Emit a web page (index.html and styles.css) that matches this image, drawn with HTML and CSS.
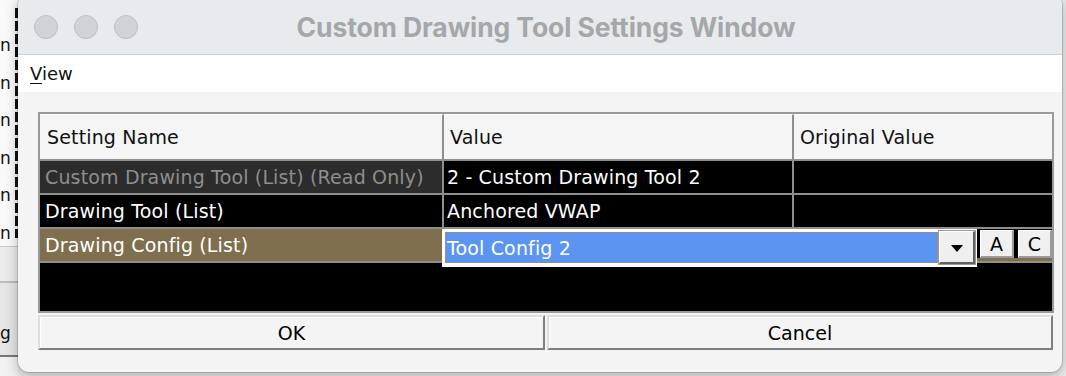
FILE: index.html
```html
<!DOCTYPE html>
<html>
<head>
<meta charset="utf-8">
<link rel="stylesheet" href="styles.css">
</head>
<body>
<div class="desk">
  <div class="bg-strip">
    <div class="bg-list">
      <div class="bg-item">n</div>
      <div class="bg-item">n</div>
      <div class="bg-item">n</div>
      <div class="bg-item">n</div>
      <div class="bg-item">n</div>
      <div class="bg-item">n</div>
    </div>
    <div class="bg-lower">
      <div class="bg-band"></div>
      <div class="bg-btn">g</div>
    </div>
  </div>
</div>
<div class="window">
  <div class="titlebar">
    <div class="lights"><span class="light"></span><span class="light"></span><span class="light"></span></div>
    <div class="title">Custom Drawing Tool Settings Window</div>
    <div></div>
  </div>
  <div class="menubar"><span class="menu"><u>V</u>iew</span></div>
  <div class="content">
    <div class="grid-frame">
      <div class="row head">
        <div class="cell c1">Setting Name</div>
        <div class="cell c2">Value</div>
        <div class="cell c3">Original Value</div>
      </div>
      <div class="row">
        <div class="cell c1 ro">Custom Drawing Tool (List) (Read Only)</div>
        <div class="cell c2">2 - Custom Drawing Tool 2</div>
        <div class="cell c3"></div>
      </div>
      <div class="row">
        <div class="cell c1">Drawing Tool (List)</div>
        <div class="cell c2">Anchored VWAP</div>
        <div class="cell c3"></div>
      </div>
      <div class="row sel">
        <div class="cell c1 selname">Drawing Config (List)</div>
        <div class="editor">
          <div class="combo">
            <div class="combo-field">Tool Config 2</div>
            <div class="combo-arrow"><span class="tri"></span></div>
          </div>
          <div class="edit-btns">
            <div class="mini-btn">A</div>
            <div class="mini-btn">C</div>
          </div>
        </div>
      </div>
      <div class="filler"></div>
    </div>
    <div class="actions">
      <div class="btn">OK</div>
      <div class="btn">Cancel</div>
    </div>
  </div>
</div>
</body>
</html>
```
FILE: styles.css
```css
* { box-sizing: border-box; }
html, body { margin: 0; padding: 0; }
body {
  width: 1066px;
  height: 376px;
  overflow: hidden;
  position: relative;
  background: #ececec;
  font-family: "DejaVu Sans", sans-serif;
  font-size: 19px;
}

/* backdrop app */
.desk { height: 376px; display: flex; }
.bg-strip { width: 18px; height: 376px; display: flex; flex-direction: column; background: #fafafa; }
.bg-list {
  height: 246px;
  padding-top: 27px;
  overflow: hidden;
  background: repeating-linear-gradient(to bottom, #111 0 10px, transparent 10px 13px) right 0 top 8px / 3px 230px no-repeat;
}
.bg-item { height: 37.5px; line-height: 37.5px; font-size: 17px; color: #111; }
.bg-lower { flex: 1; display: flex; flex-direction: column; border-top: 1px solid #c9c9c9; background: #f2f2f2; }
.bg-band { height: 36px; border-bottom: 2px solid #bdbdbd; background: #ececec; }
.bg-btn {
  height: 74px;
  padding-top: 40px;
  line-height: 20px;
  font-size: 17px;
  color: #111;
  border-bottom: 2px solid #777;
  background: #e6e6e6;
}

/* window */
.window {
  position: absolute;
  left: 18px;
  top: -6px;
  width: 1044px;
  height: 378px;
  border-radius: 11px;
  background: #f4f4f4;
  overflow: hidden;
  display: flex;
  flex-direction: column;
  box-shadow: 0 0 0 1px rgba(0,0,0,0.14), 0 4px 14px rgba(0,0,0,0.28);
}
.titlebar {
  height: 61px;
  flex: none;
  background: #e8ebee;
  border-bottom: 1px solid #d0d1d3;
  display: grid;
  grid-template-columns: 1fr auto 1fr;
  align-items: center;
  padding-top: 6px;
}
.lights { display: flex; gap: 16px; padding-left: 16px; }
.light {
  width: 24px;
  height: 24px;
  border-radius: 50%;
  background: #d1d4d7;
  border: 1px solid #bcbfc2;
}
.title {
  font-family: Inter, "Liberation Sans", sans-serif;
  font-weight: 700;
  font-size: 26.5px;
  letter-spacing: -0.1px;
  color: #a5a7a9;
  padding-left: 12px;
}
.menubar {
  height: 37px;
  flex: none;
  background: #ffffff;
  padding-left: 12px;
  display: flex;
  align-items: center;
}
.menu { font-size: 18px; color: #111; }
.menu u { text-underline-offset: 3px; }

.content {
  flex: 1;
  padding: 20px 8px 0 20px;
}
.grid-frame {
  width: 1016px;
  border: 2px solid #999999;
  display: flex;
  flex-direction: column;
  background: #000;
}
.row {
  display: flex;
  height: 34px;
  border-bottom: 2px solid #8f8f8f;
  color: #fff;
  letter-spacing: 0.15px;
}
.row.head { height: 47px; background: #f5f5f5; color: #111; }
.cell {
  display: flex;
  align-items: center;
  white-space: nowrap;
  overflow: hidden;
  border-right: 2px solid #8f8f8f;
}
.c1 { width: 404px; padding-left: 5px; }
.c2 { width: 350px; padding-left: 3px; }
.c3 { flex: 1; border-right: none; padding-left: 6px; }
.head .cell { border-top: 1px solid #fff; padding-left: 7px; }
.head .c2, .head .c3 { padding-left: 6px; }
.c1.ro { background: #2c2c2c; color: #8e8e8e; }
.row.sel { background: #000; }
.c1.selname { width: 402px; background: #7f6f4e; border-right: none; }

.editor {
  position: relative;
  z-index: 1;
  flex: 1;
  display: flex;
  align-items: flex-start;
}
.combo {
  width: 535px;
  height: 38px;
  background: #fff;
  padding: 3px 2px 4px 3px;
  display: flex;
  gap: 1px;
}
.combo-field {
  flex: 1;
  background: #5b95f1;
  border: 1px dotted #d4822e;
  color: #fff;
  padding-left: 1px;
  display: flex;
  align-items: center;
  white-space: nowrap;
}
.combo-arrow {
  width: 36px;
  margin: -1px 0;
  background: #efefef;
  border-top: 1px solid #fff;
  border-left: 1px solid #fff;
  border-right: 2px solid #626262;
  border-bottom: 2px solid #626262;
  box-shadow: 0 0 0 1px #9a9a9a;
  display: flex;
  align-items: center;
  justify-content: center;
}
.tri {
  width: 0;
  height: 0;
  border-left: 6px solid transparent;
  border-right: 6px solid transparent;
  border-top: 7px solid #000;
  margin-top: 3px;
}
.edit-btns {
  flex: 1;
  height: 32px;
  display: flex;
  gap: 4px;
  padding: 1px 0 0 3px;
  border-bottom: 3px solid #7f6f4e;
}
.mini-btn {
  width: 34px;
  height: 28px;
  background: #f0f0f0;
  border-top: 1px solid #fff;
  border-left: 1px solid #fff;
  border-right: 2px solid #9a9a9a;
  border-bottom: 2px solid #9a9a9a;
  color: #000;
  display: flex;
  align-items: center;
  justify-content: center;
}
.filler { height: 48px; background: #000; }

.actions {
  margin-top: 2px;
  display: grid;
  grid-template-columns: 507px 506px;
  gap: 2px;
}
.btn {
  height: 35px;
  background: #f4f4f4;
  border-top: 2px solid #dedede;
  border-left: 2px solid #dedede;
  border-right: 2px solid #7e7e7e;
  border-bottom: 2px solid #7e7e7e;
  box-shadow: inset 1px 1px 0 #fff;
  color: #000;
  display: flex;
  align-items: center;
  justify-content: center;
}
```
